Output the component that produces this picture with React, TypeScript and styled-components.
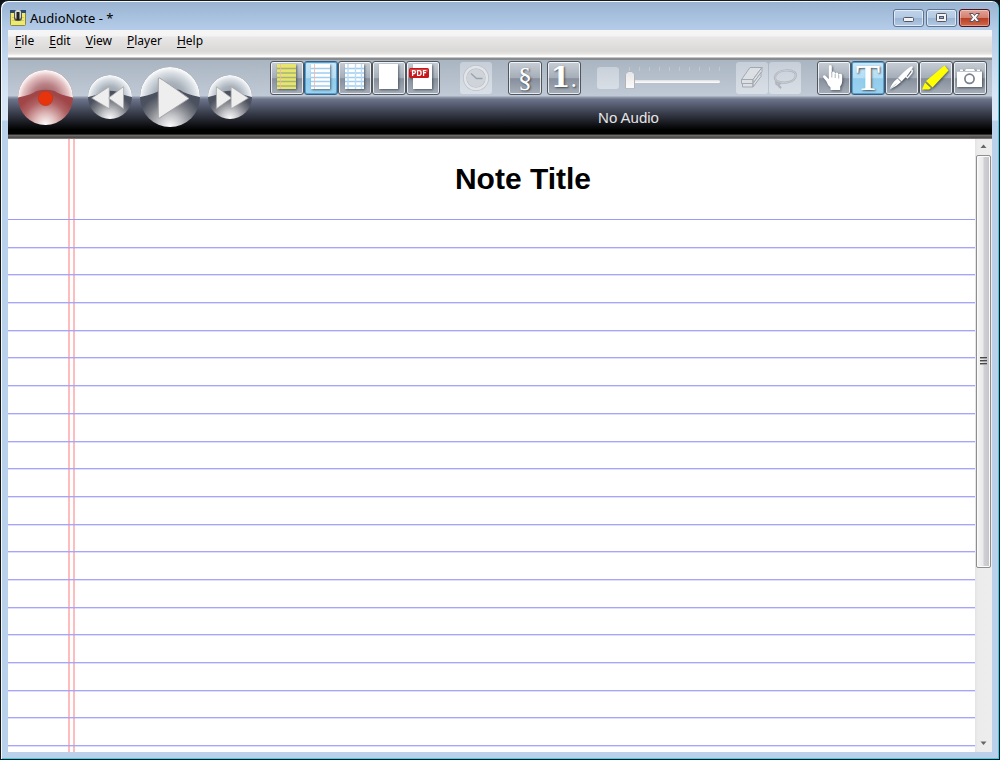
import React from "react";
import styled, { createGlobalStyle, css } from "styled-components";

const GlobalStyle = createGlobalStyle`
  * { box-sizing: border-box; }
  html, body { margin: 0; background: #0c1216; }
  button { font: inherit; padding: 0; margin: 0; border: 0; background: none; }
`;

const Window = styled.div`
  display: flex;
  flex-direction: column;
  min-height: 100vh;
  padding: 0 6px 6px;
  border: 1px solid #14191c;
  border-radius: 8px 8px 0 0;
  box-shadow: inset 1px 1px 0 #f4f9fd, inset -1px -1px 0 #2fd3ee;
  background: linear-gradient(#98b2d1 0, #b4cce8 28px, #d6e5f5 90px, #dbe8f7 119px, #b9d1ea 120px);
  font-family: "Noto Sans", "Open Sans", sans-serif;
  font-size: 12px;
  color: #000;
`;

const Frame = styled.div`
  display: flex;
  flex-direction: column;
  flex: 1;
  margin: 0 1px 1px;
`;

const TitleBar = styled.header`
  display: flex;
  align-items: center;
  height: 29px;
  padding: 5px 2px 0 2px;
  gap: 4px;
`;

const WindowTitle = styled.span`
  flex: 1;
  font-size: 13px;
  line-height: 18px;
`;

const WindowControls = styled.div`
  display: flex;
  gap: 2px;
`;

const WindowButton = styled.button<{ $close?: boolean }>`
  display: flex;
  width: 31px;
  height: 18px;
  border: 1px solid ${(p) => (p.$close ? "#4a1420" : "#5d7594")};
  border-radius: 3px;
  box-shadow: inset 0 0 0 1px rgba(255, 255, 255, ${(p) => (p.$close ? 0.35 : 0.6)});
  background: ${(p) =>
    p.$close
      ? "linear-gradient(#e5a296, #d2806f 48%, #b83c22 50%, #cf6a4c)"
      : "linear-gradient(#c0d3ea, #b3c9e3 48%, #9ab4d2 50%, #b3cae4)"};
  svg { display: block; margin: -1px; }
`;

const MenuBar = styled.nav`
  display: flex;
  height: 30px;
  padding: 2px 6px 0 7px;
  gap: 15px;
  background: linear-gradient(
    #f6f6f6 0, #f4f4f4 6px, #e9e7e7 7px, #dbd9d7 21px, #e6e5e4 24px, #fff 26px, #fff 27px, #8b8b8b 28px, #858a8f 30px
  );
`;

const MenuItem = styled.button`
  height: 18px;
  line-height: 18px;
  u { text-underline-offset: 2px; }
`;

const Toolbar = styled.section`
  display: flex;
  height: 79px;
  padding: 0 5px 5px 10px;
  background: linear-gradient(
    #a9b5c1 0, #c0cad6 36px, #8f98a8 37px, #8790a2 38px, #6d758d 39px, #4b5162 48px,
    #22242d 60px, #000 70px, #000 74px, #5c5c5c 75px, #777 76px, #3d3734 77px, #8c8c8c 79px
  );
`;

const Transport = styled.div`
  display: flex;
  align-items: center;
  gap: 8px;
  width: 252px;
`;

const RoundButton = styled.button<{ $size: number; $spaced?: boolean }>`
  flex: none;
  width: ${(p) => p.$size}px;
  height: ${(p) => p.$size}px;
  border-radius: 50%;
  margin-right: ${(p) => (p.$spaced ? 7 : 0)}px;
  svg { display: block; width: 100%; height: 100%; }
`;

const ToolArea = styled.div`
  display: flex;
  flex-direction: column;
  flex: 1;
`;

const ToolRow = styled.div`
  display: flex;
  align-items: center;
  gap: 16px;
  height: 36px;
`;

const ToolGroup = styled.div<{ $gap?: number; $inset?: number }>`
  display: flex;
  align-items: center;
  flex: none;
  gap: ${(p) => p.$gap ?? 0}px;
  padding-left: ${(p) => p.$inset ?? 0}px;
`;

const faces = {
  normal: css`
    border: 1px solid #50565e;
    box-shadow: inset 0 0 0 1px rgba(255, 255, 255, 0.75);
    background: linear-gradient(#c8ced5, #a4adb8 50%, #868f9b 52%, #a5aeb9);
  `,
  selected: css`
    border: 1px solid #2f5f86;
    box-shadow: inset 0 0 0 1px #5d9fc9;
    background: linear-gradient(#cbe7f7, #b5def4 50%, #92ccec 52%, #9bd2ef);
  `,
};

const ToolButton = styled.button<{ $selected?: boolean }>`
  display: flex;
  align-items: center;
  justify-content: center;
  width: 34px;
  height: 34px;
  border-radius: 3px;
  ${(p) => (p.$selected ? faces.selected : faces.normal)}
  svg {
    flex: none;
    filter: drop-shadow(1px 1px 1px rgba(30, 40, 50, 0.6));
  }
`;

const Glyph = styled.span<{ $size: number; $bold?: boolean; $family?: string }>`
  font-family: ${(p) => p.$family ?? '"Liberation Serif"'}, serif;
  font-size: ${(p) => p.$size}px;
  font-weight: ${(p) => (p.$bold ? 700 : 400)};
  line-height: 32px;
  color: #fff;
  text-shadow: 1px 1px 2px rgba(40, 50, 60, 0.8);
  small { font-size: 22px; font-weight: 400; line-height: 1; }
`;

const DisabledButton = styled.button<{ $size?: number }>`
  width: ${(p) => p.$size ?? 32}px;
  height: ${(p) => p.$size ?? 32}px;
  border-radius: 3px;
  background: linear-gradient(rgba(226, 230, 236, 0.5), rgba(226, 230, 236, 0.75));
  svg { display: block; }
`;

const SliderBox = styled.div`
  display: flex;
  flex-direction: column;
  width: 95px;
  height: 26px;
  padding-top: 2px;
`;

const Ticks = styled.span`
  display: flex;
  justify-content: space-between;
  height: 4px;
  padding: 0 0 0 4px;
  i { width: 1px; background: #c3c9ce; }
`;

const Slider = styled.input`
  appearance: none;
  width: 100%;
  height: 20px;
  margin: 0;
  background: none;
  &::-webkit-slider-runnable-track {
    height: 3px;
    border-radius: 2px;
    background: linear-gradient(#dedede, #fff);
  }
  &::-webkit-slider-thumb {
    appearance: none;
    width: 10px;
    height: 18px;
    margin-top: -9px;
    background: linear-gradient(#e6e6e6, #fafafa);
    border: 1px solid #b4b4b4;
    clip-path: polygon(50% 0, 100% 25%, 100% 100%, 0 100%, 0 25%);
  }
`;

const Status = styled.div`
  display: flex;
  align-items: center;
  justify-content: center;
  flex: 1;
  padding-top: 5px;
  font-family: "Liberation Sans", Arial, sans-serif;
  font-size: 15px;
  color: #e4e4e4;
`;

const Workspace = styled.main`
  display: flex;
  flex: 1;
  background: #fff;
`;

const Paper = styled.article`
  display: flex;
  flex-direction: column;
  flex: 1;
  padding-bottom: 6px;
  background: linear-gradient(
    90deg, transparent 60px, #ffbcbc 60px, #ffbcbc 62px, transparent 62px,
    transparent 65px, #ffbcbc 65px, #ffbcbc 67px, transparent 67px
  );
`;

const NoteTitle = styled.h1`
  height: 81px;
  margin: 0;
  padding: 22px 4px 0 67px;
  border-bottom: 1px solid #9a9afb;
  font-family: "Liberation Sans", Arial, sans-serif;
  font-size: 30px;
  line-height: 36px;
  text-align: center;
`;

const Rule = styled.div`
  flex: 1;
  min-height: 24px;
  border-bottom: 1px solid #a5a5fb;
  box-shadow: 0 1px 0 rgba(150, 150, 250, 0.3);
`;

const ScrollBar = styled.div`
  display: flex;
  flex-direction: column;
  width: 17px;
  background: linear-gradient(90deg, #e3e3e3, #ececec 3px, #ededed);
`;

const ScrollArrow = styled.button`
  width: 17px;
  height: 16px;
  svg { display: block; }
`;

const ScrollTrack = styled.div`
  flex: 1;
  display: flex;
  flex-direction: column;
  padding: 0 1px;
`;

const ScrollThumb = styled.div`
  display: flex;
  flex: 71;
  align-items: center;
  justify-content: center;
  border: 1px solid #8e8e8e;
  border-radius: 2px;
  box-shadow: inset 0 0 0 1px #fbfbfb;
  background: linear-gradient(90deg, #f5f5f5, #e9e9ea 48%, #d0d1d4 52%, #c4c4c8);
`;

const ScrollRest = styled.div`
  flex: 29;
`;

const AppIcon = () => (
  <svg width="16" height="16" viewBox="0 0 16 16" aria-hidden="true">
    <rect x="0.5" y="0.5" width="15" height="15" rx="1" fill="#eee96f" stroke="#8a864a" />
    <path d="M0 0h16v3H0z" fill="#2c4a70" />
    <path d="M2 7.5h12M2 10.500h12" stroke="#cfcc66" />
    <rect x="4" y="1" width="8" height="10" rx="3" fill="#55544a" />
    <rect x="5" y="0" width="6" height="9" rx="2" fill="#d9d9cf" />
    <path d="M8 2v8" stroke="#222" strokeWidth="3" />
  </svg>
);

type OrbProps = { id: string; red?: boolean; children: React.ReactNode };

const Orb = ({ id, red, children }: OrbProps) => (
  <svg viewBox="0 0 60 60" aria-hidden="true">
    <defs>
      <radialGradient id={`${id}-top`} cx="30" cy="31" r="31" gradientUnits="userSpaceOnUse">
        <stop offset="0" stopColor={red ? "#8d4a4d" : "#8d959f"} />
        <stop offset="0.5" stopColor={red ? "#b98286" : "#aab2bb"} />
        <stop offset="0.8" stopColor={red ? "#e3bfc1" : "#d6dce2"} />
        <stop offset="1" stopColor="#ffffff" />
      </radialGradient>
      <radialGradient id={`${id}-low`} cx="30" cy="60" r="34" gradientUnits="userSpaceOnUse">
        <stop offset="0" stopColor="#ffffff" />
        <stop offset="0.35" stopColor={red ? "#e0bcbc" : "#c4c5c9"} />
        <stop offset="0.75" stopColor={red ? "#b06264" : "#74777f"} />
        <stop offset="1" stopColor={red ? "#a04648" : "#4c515f"} />
      </radialGradient>
    </defs>
    <circle cx="30" cy="30" r="30" fill={`url(#${id}-low)`} />
    <path d="M0 30a30 30 0 0 1 60 0Q45 27 40 23Q30 20 20 23Q15 27 0 30z" fill={`url(#${id}-top)`} />
    {children}
  </svg>
);

const arrowStyle = { fill: "#eeeeee", stroke: "#a4a4a6", strokeWidth: 1, strokeLinejoin: "round" as const };

const Sheet = ({ tint = "#fff", lines, grid, margin, pdf }: {
  tint?: string; lines?: string; grid?: boolean; margin?: boolean; pdf?: boolean;
}) => (
  <svg width="34" height="34" viewBox="0 0 34 34" aria-hidden="true">
    <rect x="7" y="3" width="19" height="25" fill={tint} />
    {lines && <path d="M7 7.500h19M7 12h19M7 16.500h19M7 20.500h19M7 25h19" stroke={lines} strokeWidth="1.300" />}
    {grid && <path d="M10 3v25M17.500 3v25M23.500 3v25" stroke="#bcdcf5" strokeWidth="1.400" />}
    {margin && <path d="M10.500 3v25" stroke="#f3b8a8" strokeWidth=".8" />}
    {pdf && (
      <>
        <rect x="3" y="7" width="20" height="10" rx="1.500" fill="#c8171c" />
        <path d="M4 8h18v3H4z" fill="#e0514f" opacity=".7" />
        <text x="13" y="14.800" textAnchor="middle" fontFamily="Open Sans, sans-serif" fontWeight="700" fontSize="8" fill="#fff">PDF</text>
      </>
    )}
  </svg>
);

const Hand = () => (
  <svg width="34" height="34" viewBox="0 0 34 34" aria-hidden="true">
    <path
      d="M11.800 5.500q0-1.600 1.500-1.600t1.500 1.600V12q.2-1.500 1.700-1.400 1.500.1 1.500 1.700v.8q.3-1.600 1.800-1.500 1.600.1 1.600 1.800v.6q.3-1.300 2-1.200 1.800.1 1.800 1.900V20q0 3-2 5.500V29H13.500v-2.500Q10.500 24 9.500 20.500L6.300 16.500q-.8-1.400.3-2 1.200-.6 2.400.7l2.800 2.700z"
      fill="#fff"
    />
    <path d="M14.800 11v5.500M18.200 13v4M21.700 14v3.500" stroke="#8b949f" strokeWidth=".7" />
  </svg>
);

const Pen = () => (
  <svg width="34" height="34" viewBox="0 0 34 34" aria-hidden="true">
    <path d="M4.500 28.500Q7 21.500 12.500 17.500L16 21Q11 26 4.500 28.500z" fill="#fff" />
    <path d="M13 17Q20 9 26 5.500q2.500-.6 1.600 1.500Q23.500 14 16.500 20.500z" fill="#fff" />
    <path d="M26.500 8.500q1.500 1.500 0 3.500l-4 4.800-2-1.500" fill="none" stroke="#fff" strokeWidth="1.300" />
    <path d="M4.500 28.500l7-6" stroke="#a5acb5" strokeWidth=".6" />
  </svg>
);

const Marker = () => (
  <svg width="34" height="34" viewBox="0 0 34 34" aria-hidden="true">
    <path d="M25.500 4.500L29.500 9.500 13.500 26.500 7 20z" fill="#ffff00" />
    <path d="M6 21.500l6 5.500-2 1.500H3z" fill="#ffff00" />
    <path d="M6.500 20.800l6.200 6" stroke="#9b9b39" strokeWidth=".8" />
  </svg>
);

const Camera = () => (
  <svg width="34" height="34" viewBox="0 0 34 34" aria-hidden="true">
    <path d="M4 10h3V8.500h3V10h2l1-2h8l1 2h2V8.500h3V10h2v16H4z" fill="#fff" />
    <path d="M4 10.500h25" stroke="#c3c8ce" />
    <circle cx="16.500" cy="17.800" r="4.600" fill="#fff" stroke="#78818c" strokeWidth="1.700" />
  </svg>
);

const Clock = () => (
  <svg width="32" height="32" viewBox="0 0 32 32" aria-hidden="true">
    <circle cx="16" cy="16" r="11" fill="none" stroke="#bcc1c8" strokeWidth="4" />
    <circle cx="16" cy="16" r="11" fill="none" stroke="#e1e4e9" strokeWidth="2.500" />
    <circle cx="16" cy="16" r="9" fill="#cfd3da" />
    <path d="M11 11.500l5.500 5h6" fill="none" stroke="#9da2aa" strokeWidth="1.300" />
  </svg>
);

const Eraser = () => (
  <svg width="32" height="32" viewBox="0 0 32 32" aria-hidden="true">
    <g fill="#dce0e5" stroke="#a3a9b0" strokeWidth="1" strokeLinejoin="round">
      <path d="M5.500 17.500L14 5.500h12L17 17.500z" />
      <path d="M5.500 17.500H17v4H5.500zM17 17.500L26 5.500v4L17 21.500z" />
      <path d="M6.500 21.500H17v3.500H6.500zM17 21.500l8-11v4L17 25z" />
    </g>
  </svg>
);

const Lasso = () => (
  <svg width="32" height="32" viewBox="0 0 32 32" aria-hidden="true">
    <g fill="none" strokeLinecap="round">
      <path d="M8 19.500C4 16 6 9.500 16 8.500c9-1 12.500 3 10 7.500-3 5-13 5.500-17 3.500M7 20.500q3-1.500 4 .8-1 2-3.500 1M10 22q-1 2 1.500 3.500" stroke="#b0b5bd" strokeWidth="2.200" />
      <path d="M8 19.500C4 16 6 9.500 16 8.500c9-1 12.500 3 10 7.500-3 5-13 5.500-17 3.500" stroke="#c8cdd4" strokeWidth="1" />
    </g>
  </svg>
);

const menus = ["File", "Edit", "View", "Player", "Help"];

export default function App() {
  return (
    <>
      <GlobalStyle />
      <Window>
        <Frame>
          <TitleBar>
            <AppIcon />
            <WindowTitle>AudioNote - *</WindowTitle>
            <WindowControls>
              <WindowButton aria-label="Minimize">
                <svg width="31" height="18" viewBox="0 0 31 18">
                  <rect x="10.500" y="8.500" width="10" height="4" rx="1" fill="#f3f3f3" stroke="#535666" />
                </svg>
              </WindowButton>
              <WindowButton aria-label="Maximize">
                <svg width="31" height="18" viewBox="0 0 31 18">
                  <rect x="10.500" y="4.500" width="10" height="8" rx="1" fill="#f3f3f3" stroke="#535666" />
                  <rect x="13.500" y="7.500" width="4" height="2" fill="#8fb0d8" stroke="#535666" />
                </svg>
              </WindowButton>
              <WindowButton $close aria-label="Close">
                <svg width="31" height="18" viewBox="0 0 31 18">
                  <path d="M10.500 4.500h3.500l1.500 2 1.500-2h3.500l-3 4 3 4H17l-1.500-2-1.500 2h-3.500l3-4z" fill="#f7f7f7" stroke="#5a5260" />
                </svg>
              </WindowButton>
            </WindowControls>
          </TitleBar>

          <MenuBar>
            {menus.map((m) => (
              <MenuItem key={m}><u>{m[0]}</u>{m.slice(1)}</MenuItem>
            ))}
          </MenuBar>

          <Toolbar>
            <Transport>
              <RoundButton $size={55} $spaced aria-label="Record">
                <Orb id="record" red>
                  <circle cx="30" cy="31" r="7.800" fill="#e8340c" stroke="#b83a20" strokeWidth=".8" />
                </Orb>
              </RoundButton>
              <RoundButton $size={44} aria-label="Rewind">
                <Orb id="rewind">
                  <path d="M29 16v30L5 31.500z" {...arrowStyle} />
                  <path d="M48.500 16v30L28 31.500z" {...arrowStyle} />
                </Orb>
              </RoundButton>
              <RoundButton $size={60} aria-label="Play">
                <Orb id="play">
                  <path d="M19.500 11q6 3.500 29.500 20.500L19.500 51q-1.200 0-1.200-1.500V12q0-1.200 1.200-1z" {...arrowStyle} />
                </Orb>
              </RoundButton>
              <RoundButton $size={44} aria-label="Fast forward">
                <Orb id="forward">
                  <path d="M11.500 16v30L32 31.500z" {...arrowStyle} />
                  <path d="M31.500 16v30L55 31.500z" {...arrowStyle} />
                </Orb>
              </RoundButton>
            </Transport>

            <ToolArea>
              <ToolRow>
                <ToolGroup>
                  <ToolButton aria-label="Yellow paper"><Sheet tint="#e9e56c" lines="#a3b57c" margin /></ToolButton>
                  <ToolButton $selected aria-label="Lined paper"><Sheet lines="#a0cdf0" margin /></ToolButton>
                  <ToolButton aria-label="Grid paper"><Sheet lines="#a0cdf0" grid /></ToolButton>
                  <ToolButton aria-label="Blank paper"><Sheet /></ToolButton>
                  <ToolButton aria-label="PDF paper"><Sheet pdf /></ToolButton>
                </ToolGroup>
                <ToolGroup $inset={4}>
                  <DisabledButton disabled aria-label="Timestamp"><Clock /></DisabledButton>
                </ToolGroup>
                <ToolGroup $gap={5}>
                  <ToolButton aria-label="Section"><Glyph $size={28}>§</Glyph></ToolButton>
                  <ToolButton aria-label="Numbered list"><Glyph $size={28} $bold $family='"DejaVu Serif"'>1<small>.</small></Glyph></ToolButton>
                </ToolGroup>
                <ToolGroup $gap={6}>
                  <DisabledButton disabled $size={22} aria-label="Ink colour" />
                  <SliderBox>
                    <Ticks>{Array.from({ length: 10 }, (_, i) => <i key={i} />)}</Ticks>
                    <Slider type="range" min={0} max={9} defaultValue={0} aria-label="Ink width" />
                  </SliderBox>
                </ToolGroup>
                <ToolGroup $gap={1}>
                  <DisabledButton disabled aria-label="Eraser"><Eraser /></DisabledButton>
                  <DisabledButton disabled aria-label="Lasso"><Lasso /></DisabledButton>
                </ToolGroup>
                <ToolGroup>
                  <ToolButton aria-label="Hand"><Hand /></ToolButton>
                  <ToolButton $selected aria-label="Text"><Glyph $size={36} $bold>T</Glyph></ToolButton>
                  <ToolButton aria-label="Pen"><Pen /></ToolButton>
                  <ToolButton aria-label="Highlighter"><Marker /></ToolButton>
                  <ToolButton aria-label="Camera"><Camera /></ToolButton>
                </ToolGroup>
              </ToolRow>
              <Status>No Audio</Status>
            </ToolArea>
          </Toolbar>

          <Workspace>
            <Paper>
              <NoteTitle>Note Title</NoteTitle>
              {Array.from({ length: 19 }, (_, i) => <Rule key={i} />)}
            </Paper>
            <ScrollBar>
              <ScrollArrow aria-label="Scroll up">
                <svg width="17" height="16" viewBox="0 0 17 16"><path d="M5.500 9l3-3.500 3 3.500z" fill="#666" /></svg>
              </ScrollArrow>
              <ScrollTrack>
                <ScrollThumb>
                  <svg width="7" height="9" viewBox="0 0 7 9"><path d="M0 .5h7M0 3.500h7M0 6.500h7" stroke="#4a4a4a" /><path d="M0 1.500h7M0 4.500h7M0 7.500h7" stroke="#a5a5a5" /></svg>
                </ScrollThumb>
                <ScrollRest />
              </ScrollTrack>
              <ScrollArrow aria-label="Scroll down">
                <svg width="17" height="16" viewBox="0 0 17 16"><path d="M5.500 5.500l3 3.500 3-3.500z" fill="#666" /></svg>
              </ScrollArrow>
            </ScrollBar>
          </Workspace>
        </Frame>
      </Window>
    </>
  );
}
